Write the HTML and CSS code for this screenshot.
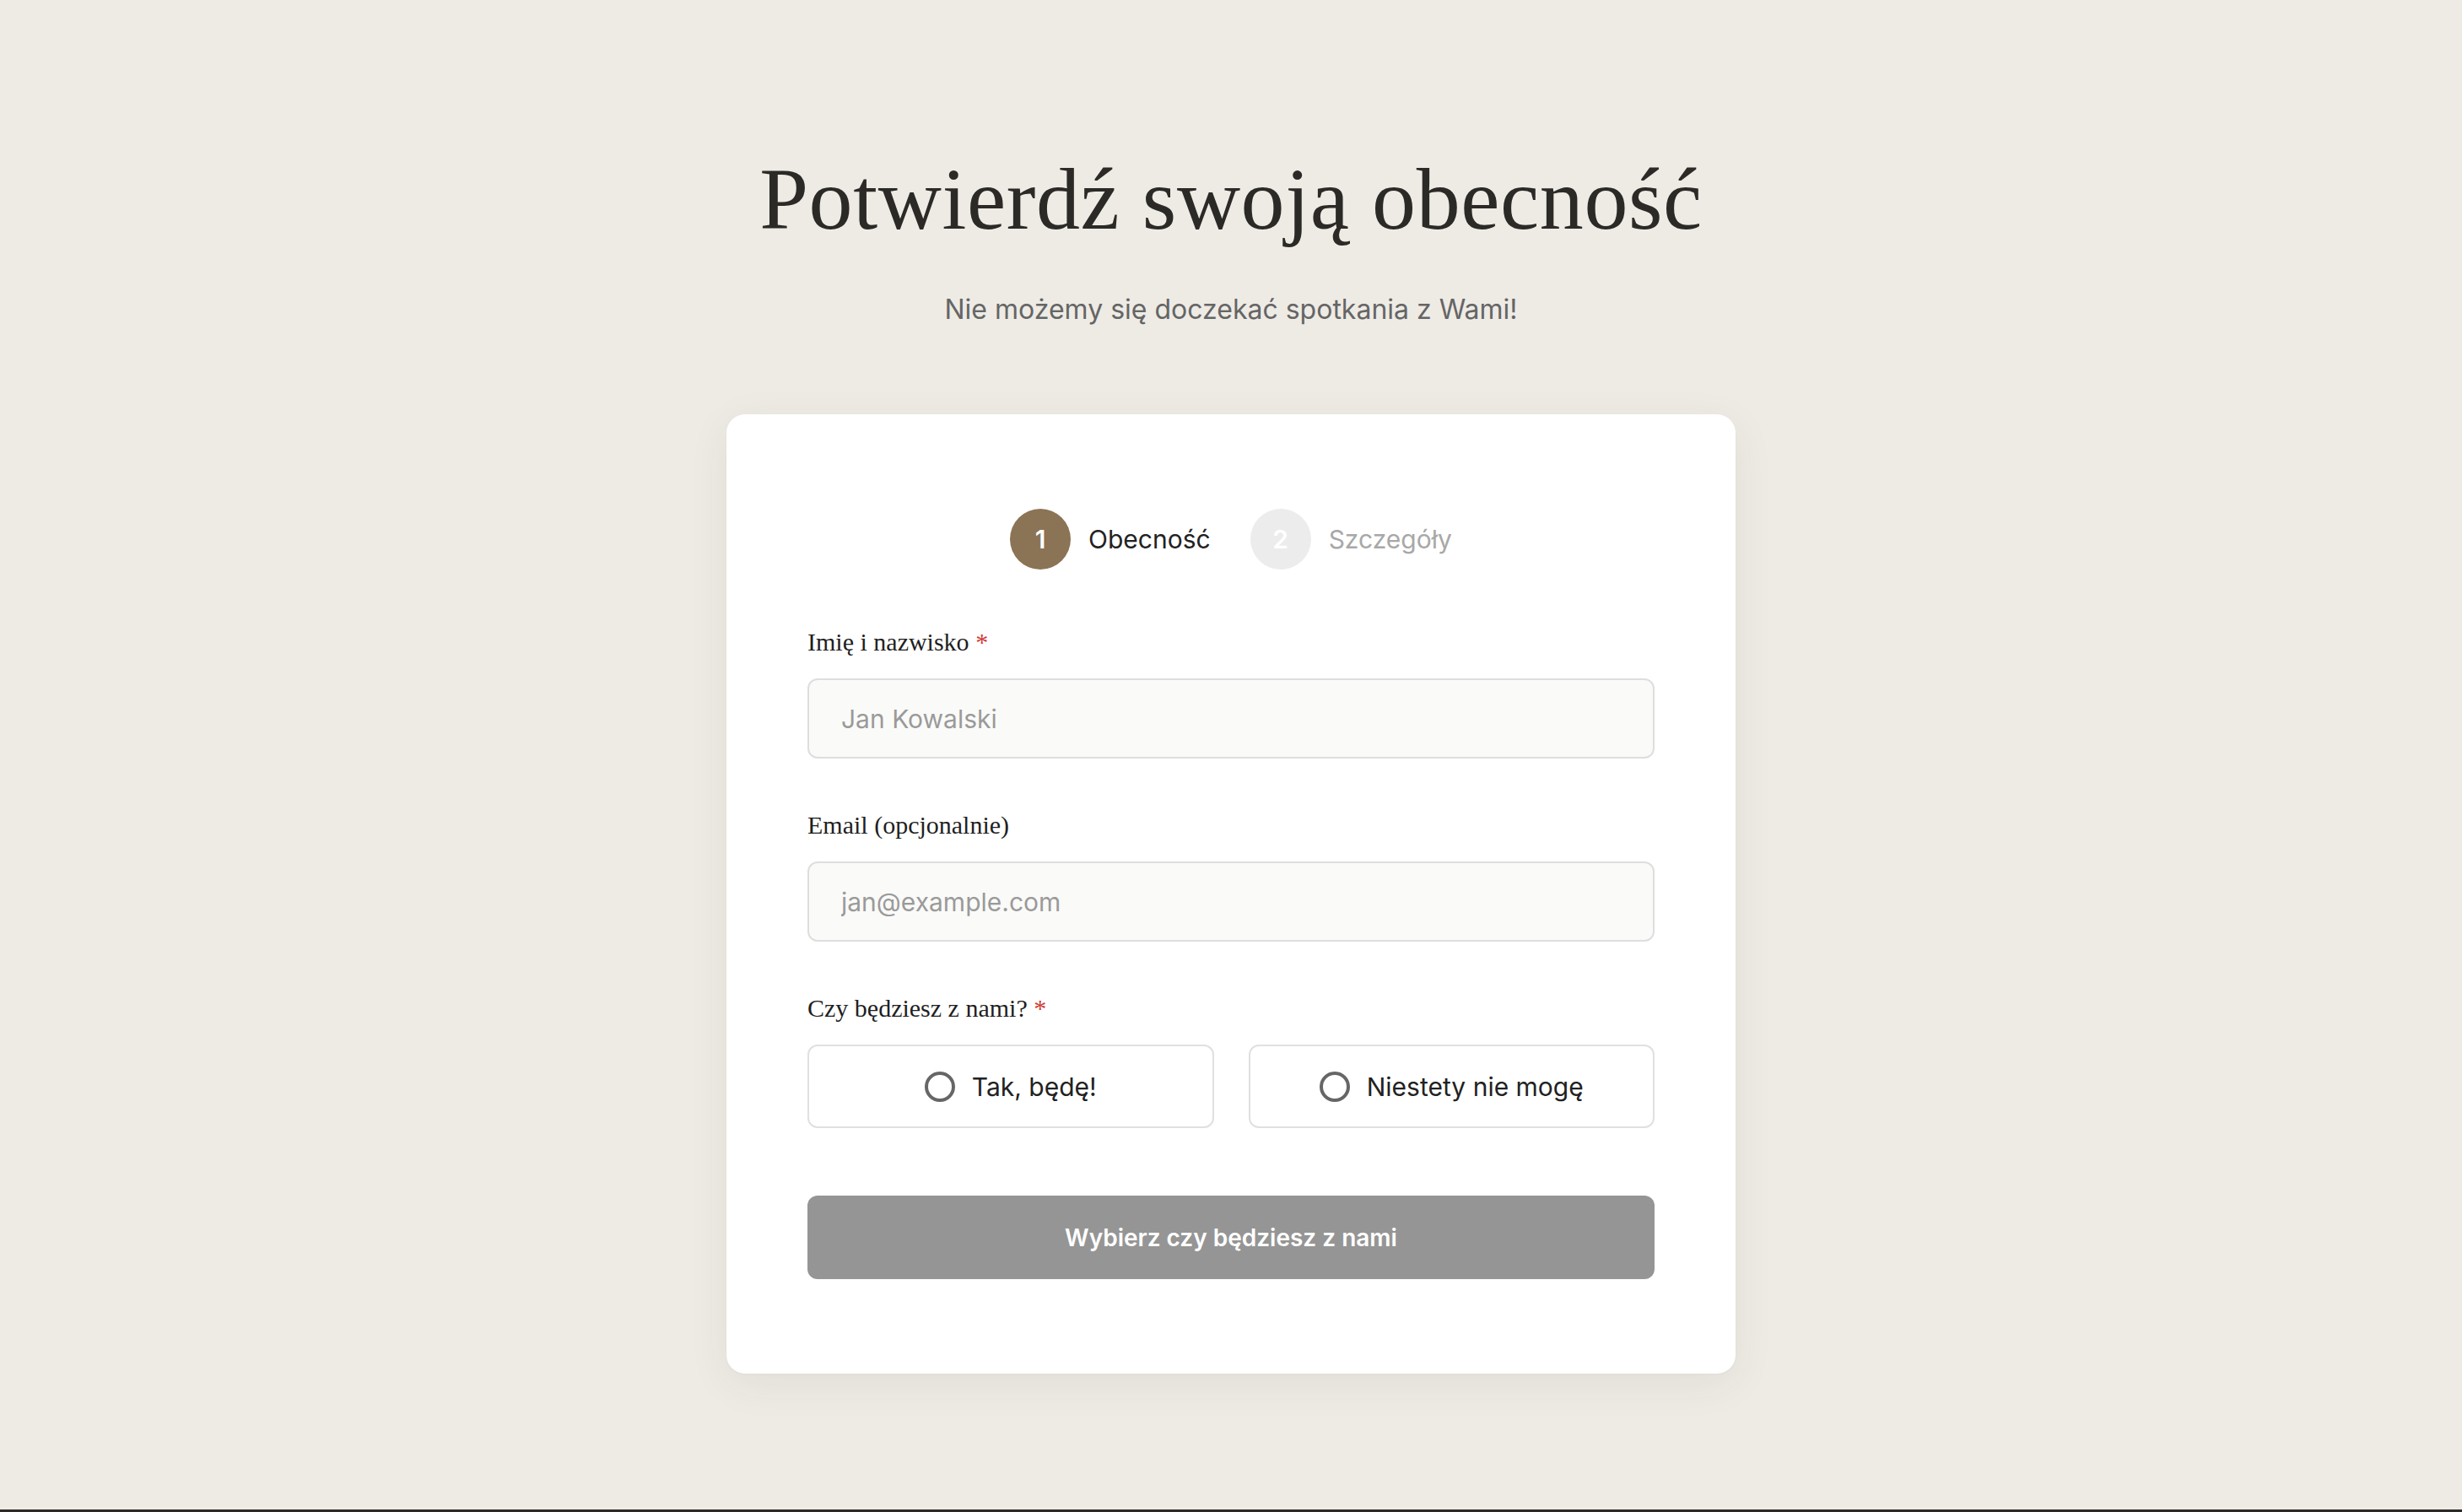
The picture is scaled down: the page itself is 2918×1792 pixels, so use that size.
FILE: index.html
```html
<!DOCTYPE html>
<html lang="pl">
<head>
<meta charset="utf-8">
<title>Potwierdź swoją obecność</title>
<link rel="stylesheet" href="styles.css">
</head>
<body>
<main class="page">
  <h1 class="title">Potwierdź swoją obecność</h1>
  <p class="subtitle">Nie możemy się doczekać spotkania z Wami!</p>
  <section class="card">
    <div class="stepper">
      <div class="step step-active">
        <span class="step-num">1</span>
        <span class="step-label">Obecność</span>
      </div>
      <div class="step step-idle">
        <span class="step-num">2</span>
        <span class="step-label">Szczegóły</span>
      </div>
    </div>
    <form class="form">
      <div class="field">
        <label class="label" for="name">Imię i nazwisko <span class="req">*</span></label>
        <input class="input" id="name" type="text" placeholder="Jan Kowalski">
      </div>
      <div class="field">
        <label class="label" for="email">Email (opcjonalnie)</label>
        <input class="input" id="email" type="email" placeholder="jan@example.com">
      </div>
      <div class="field field-last">
        <div class="label">Czy będziesz z nami? <span class="req">*</span></div>
        <div class="choices">
          <div class="choice"><span class="radio"></span><span class="choice-text">Tak, będę!</span></div>
          <div class="choice"><span class="radio"></span><span class="choice-text">Niestety nie mogę</span></div>
        </div>
      </div>
      <button class="submit" type="button">Wybierz czy będziesz z nami</button>
    </form>
  </section>
</main>
<footer class="footer"></footer>
</body>
</html>
```

FILE: styles.css
```css
* { box-sizing: border-box; }

html, body {
  margin: 0;
  padding: 0;
}

body {
  background: #eeebe5;
  font-family: Inter, "Noto Sans", sans-serif;
  color: #2a2a2a;
}

.page {
  min-height: 1789px;
  display: flex;
  flex-direction: column;
  align-items: center;
  padding-top: 173px;
}

.title {
  margin: 0;
  font-family: "Liberation Serif", "DejaVu Serif", serif;
  font-weight: 400;
  font-size: 104px;
  line-height: 125px;
  color: #2b2a27;
  letter-spacing: 0.6px;
}

.subtitle {
  margin: 45px 0 0;
  font-size: 32px;
  line-height: 48px;
  color: #656565;
}

.card {
  margin-top: 100px;
  width: 1196px;
  background: #ffffff;
  border-radius: 22px;
  padding: 112px 96px;
  box-shadow: 0 12px 50px rgba(60, 50, 30, 0.07), 0 1px 3px rgba(0, 0, 0, 0.03);
}

.stepper {
  display: flex;
  justify-content: center;
  gap: 47px;
  height: 72px;
}

.step {
  display: flex;
  align-items: center;
  gap: 21px;
}

.step-num {
  width: 72px;
  height: 72px;
  border-radius: 50%;
  display: flex;
  align-items: center;
  justify-content: center;
  font-size: 30px;
  font-weight: 600;
  color: #ffffff;
}

.step-label {
  font-size: 30px;
}

.step-active .step-num { background: #8b7355; }
.step-active .step-label { color: #222222; }
.step-idle .step-num { background: #ececec; }
.step-idle .step-label { color: #a8a8a8; }

.form {
  margin-top: 65px;
  display: flex;
  flex-direction: column;
}

.field {
  display: flex;
  flex-direction: column;
  margin-bottom: 58px;
}

.field-last { margin-bottom: 80px; }

.label {
  font-family: "Liberation Serif", "DejaVu Serif", serif;
  font-size: 30px;
  line-height: 42px;
  color: #1f1f1f;
  margin-bottom: 22px;
}

.req { color: #d03a35; }

.input {
  height: 95px;
  border: 2px solid #dedede;
  border-radius: 12px;
  background: #fafaf8;
  padding: 0 38px;
  font-family: Inter, "Noto Sans", sans-serif;
  font-size: 30px;
  color: #222222;
  outline: none;
}

.input::placeholder { color: #9a9a9a; }

.choices {
  display: grid;
  grid-template-columns: 1fr 1fr;
  gap: 41px;
}

.choice {
  height: 99px;
  border: 2px solid #e0e0e0;
  border-radius: 12px;
  background: #ffffff;
  display: flex;
  align-items: center;
  justify-content: center;
  gap: 20px;
}

.radio {
  width: 36px;
  height: 36px;
  border: 4px solid #666666;
  border-radius: 50%;
}

.choice-text {
  font-size: 30px;
  color: #222222;
}

.submit {
  height: 99px;
  border: none;
  border-radius: 12px;
  background: #959595;
  color: #ffffff;
  font-family: Inter, "Noto Sans", sans-serif;
  font-size: 28px;
  font-weight: 600;
}

.footer {
  height: 120px;
  background: #2b2a26;
}
```
